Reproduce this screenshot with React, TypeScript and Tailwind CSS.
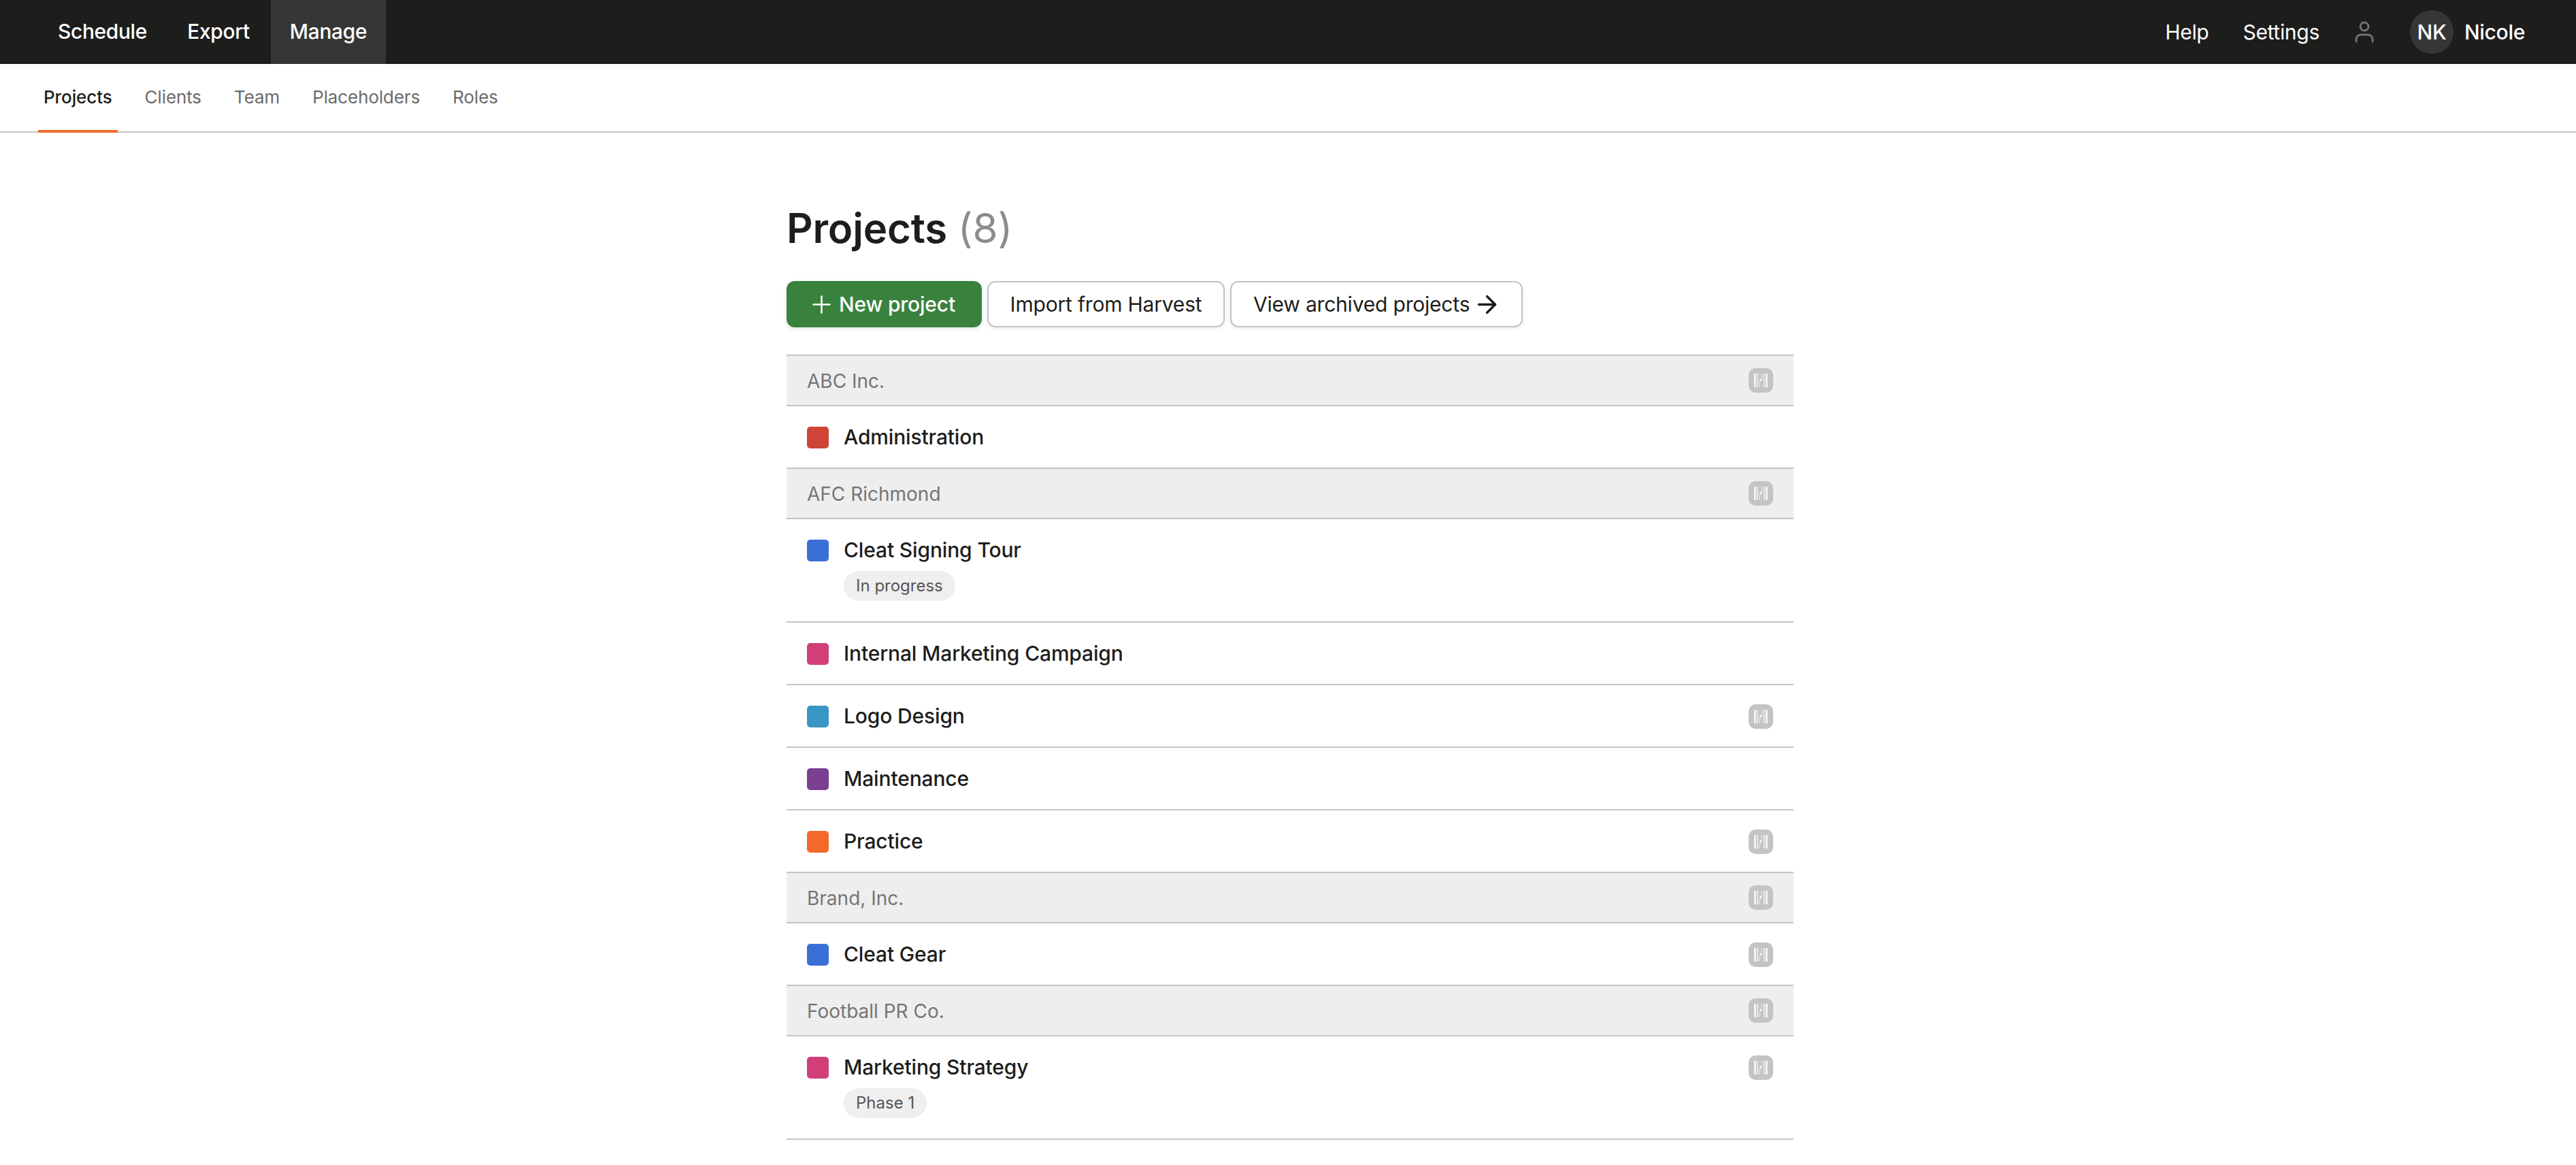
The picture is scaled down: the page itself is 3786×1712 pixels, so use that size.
import React from 'react';
import { Plus, ArrowRight } from 'lucide-react';

const HarvestBadge = () => (
  <div className="w-[36px] h-[36px] rounded-[10px] bg-[#c4c4c4] shrink-0">
    <svg width="36" height="36" viewBox="0 0 36 36" fill="#f6f6f6">
      <path d="M8 8h2.800v20H8zM12.300 8h1.500v20h-1.500zM22 8h1.500v20H22zM25 8h2.800v20H25z" />
      <path d="M16.300 15.800h3.200v3.200h-3.200z" />
      <path fillOpacity="0.75" d="M15 28l1.200-9h1.200L16.300 28zM20.700 8l-1.200 7.800h-1.200L19.500 8z" />
    </svg>
  </div>
);

type Row =
  | { kind: 'client'; name: string }
  | { kind: 'project'; name: string; color: string; tag?: string; harvest?: boolean };

const rows: Row[] = [
  { kind: 'client', name: 'ABC Inc.' },
  { kind: 'project', name: 'Administration', color: 'bg-[#cf4436]' },
  { kind: 'client', name: 'AFC Richmond' },
  { kind: 'project', name: 'Cleat Signing Tour', color: 'bg-[#3a6fd8]', tag: 'In progress' },
  { kind: 'project', name: 'Internal Marketing Campaign', color: 'bg-[#d23f78]' },
  { kind: 'project', name: 'Logo Design', color: 'bg-[#3a96c4]', harvest: true },
  { kind: 'project', name: 'Maintenance', color: 'bg-[#7a3f91]' },
  { kind: 'project', name: 'Practice', color: 'bg-[#f4692a]', harvest: true },
  { kind: 'client', name: 'Brand, Inc.' },
  { kind: 'project', name: 'Cleat Gear', color: 'bg-[#3a6fd8]', harvest: true },
  { kind: 'client', name: 'Football PR Co.' },
  { kind: 'project', name: 'Marketing Strategy', color: 'bg-[#d23f78]', tag: 'Phase 1', harvest: true },
];

const App: React.FC = () => {
  return (
    <div className="min-h-screen bg-white font-['Inter',sans-serif] text-[#1d1d1b]">
      <header className="h-[94px] bg-[#1d1d1b] flex items-stretch justify-between pl-[57px] pr-[75px] text-white text-[30px]">
        <nav className="flex gap-[2px] font-medium tracking-[-0.4px]">
          <a className="w-[187px] pb-[1px] flex items-center justify-center">Schedule</a>
          <a className="w-[150px] pb-[1px] flex items-center justify-center">Export</a>
          <a className="w-[169px] pb-[1px] flex items-center justify-center bg-[#363636]">Manage</a>
        </nav>
        <div className="flex items-center tracking-[-0.3px]">
          <a>Help</a>
          <a className="ml-[50px]">Settings</a>
          <svg className="ml-[52px]" width="28" height="32" viewBox="0 0 28 32" fill="none" stroke="#707070" strokeWidth="3" strokeLinecap="round">
            <circle cx="14" cy="8" r="6" />
            <path d="M2 30v-3a7 7 0 0 1 7-7h10a7 7 0 0 1 7 7v3" />
          </svg>
          <div className="ml-[53px] w-[64px] h-[64px] rounded-full bg-[#363636] flex items-center justify-center font-medium">NK</div>
          <span className="ml-[16px] font-medium">Nicole</span>
        </div>
      </header>

      <div className="h-[101px] border-b-2 border-[#c4c4c4] flex items-stretch gap-[32px] pl-[56px] text-[26px] text-[#6b6b6b] tracking-[-0.1px]">
        <a className="px-[8px] pb-[1px] flex items-center font-medium text-[#1d1d1b] border-b-4 border-[#f4692a] -mb-[2px]">Projects</a>
        <a className="px-[8px] pb-[2px] flex items-center">Clients</a>
        <a className="px-[8px] pb-[2px] flex items-center">Team</a>
        <a className="px-[8px] pb-[2px] flex items-center">Placeholders</a>
        <a className="px-[8px] pb-[2px] flex items-center">Roles</a>
      </div>

      <main className="pl-[6px]">
        <div className="w-[1480px] mx-auto pt-[104px]">
          <h1 className="text-[60px] leading-[72px] font-semibold tracking-[-0.2px]">
            Projects <span className="ml-[1px] font-normal text-[#8c8c8c]">(8)</span>
          </h1>
          <div className="flex gap-[8px] mt-[42px] text-[30px] leading-none tracking-[-0.2px]">
            <button className="h-[68px] w-[287px] rounded-[12px] bg-[#38823e] text-white font-medium flex items-center gap-[5px] pl-[31px] shadow-[0_2px_6px_rgba(0,0,0,0.12)]">
              <Plus size={41} strokeWidth={1.5} />
              New project
            </button>
            <button className="h-[68px] w-[349px] rounded-[12px] border-2 border-[#c4c4c4] flex items-center justify-center shadow-[0_2px_6px_rgba(0,0,0,0.08)]">
              Import from Harvest
            </button>
            <button className="h-[68px] w-[430px] rounded-[12px] border-2 border-[#c4c4c4] flex items-center gap-[5px] pl-[32px] shadow-[0_2px_6px_rgba(0,0,0,0.08)]">
              View archived projects
              <ArrowRight size={41} strokeWidth={2} />
            </button>
          </div>

          <div className="mt-[40px] border-t-2 border-[#c4c4c4]">
            {rows.map((r) =>
              r.kind === 'client' ? (
                <div key={r.name} className="h-[74px] bg-[#eeeeee] border-b-2 border-[#c4c4c4] flex items-center justify-between px-[30px] text-[28px] text-[#757575]">
                  <span className="pt-[2px]">{r.name}</span>
                  <HarvestBadge />
                </div>
              ) : (
                <div key={r.name} className="border-b-2 border-[#c4c4c4] flex items-start justify-between px-[30px] pt-[28px] pb-[28px]">
                  <div className="flex items-start gap-[22px]">
                    <div className={`w-[32px] h-[32px] rounded-[5px] mt-[2px] ${r.color}`} />
                    <div className="flex flex-col">
                      <span className="text-[30px] leading-[34px] font-medium tracking-[-0.15px]">{r.name}</span>
                      {r.tag && (
                        <span className="self-start mt-[14px] mb-[2px] h-[44px] px-[18px] rounded-full bg-[#efefef] text-[24px] text-[#555555] flex items-center">{r.tag}</span>
                      )}
                    </div>
                  </div>
                  {r.harvest && (
                    <div className="h-[34px]">
                      <HarvestBadge />
                    </div>
                  )}
                </div>
              )
            )}
          </div>
        </div>
      </main>
    </div>
  );
};

export default App;
